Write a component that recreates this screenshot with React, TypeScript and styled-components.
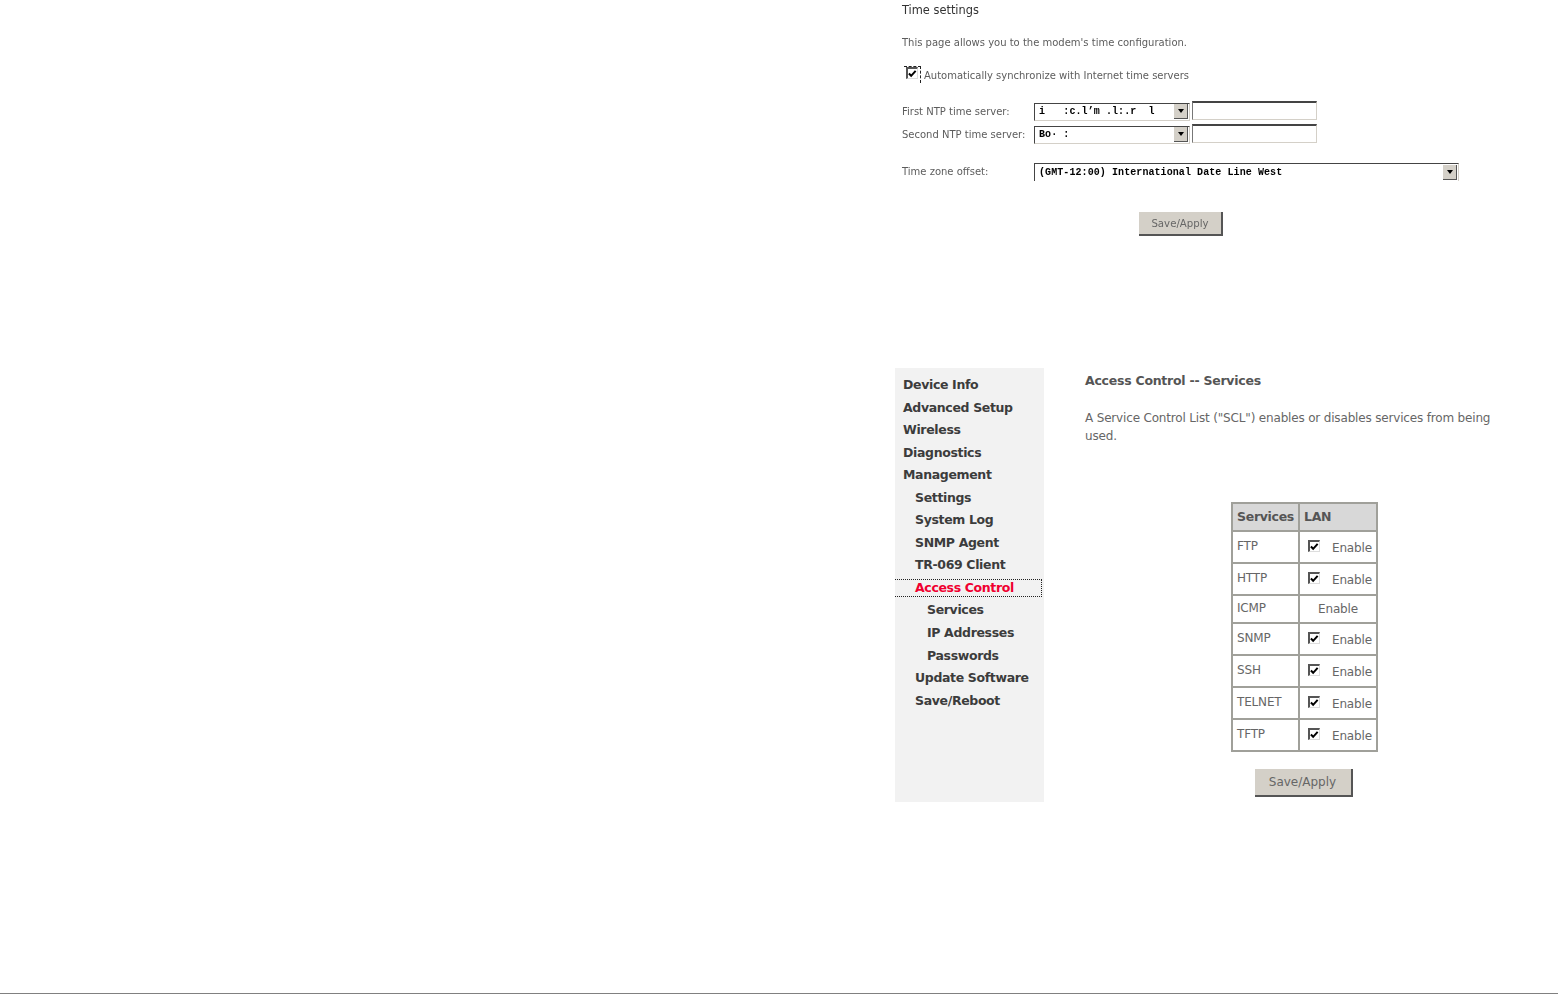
import React from 'react';
import styled, { createGlobalStyle } from 'styled-components';

const GlobalStyle = createGlobalStyle`
  html, body {
    margin: 0;
    padding: 0;
    background: #fff;
  }
  body {
    font-family: 'DejaVu Sans', 'Liberation Sans', sans-serif;
  }
`;

const Page = styled.div`
  width: 1558px;
  height: 994px;
  box-sizing: border-box;
  padding-left: 895px;
  border-bottom: 1px solid #808080;
  overflow: hidden;
`;

/* time settings, a blurry scan in the original */
const TimeSection = styled.section`
  height: 368px;
  box-sizing: border-box;
  padding: 3px 0 0 7px;
  color: #5c5c5c;
  font-size: 10px;
  filter: blur(0.5px);
`;
const TimeTitle = styled.div`
  height: 15px;
  line-height: 15px;
  font-size: 11.4px;
  color: #333;
`;
const TimeText = styled.div`
  margin-top: 17px;
  height: 15px;
  line-height: 15px;
`;
const SyncRow = styled.div`
  margin-top: 15px;
  height: 18px;
  display: flex;
  align-items: center;
  line-height: 18px;
  padding-top: 2px;
`;
const FocusBox = styled.span`
  width: 17px;
  height: 17px;
  margin: -4px 3px 0 2px;
  box-sizing: border-box;
  border: 1px dashed #222;
  border-left: none;
  border-bottom: none;
  display: flex;
  align-items: center;
  justify-content: center;
`;
const FieldRow = styled.div<{ $top: number }>`
  margin-top: ${({ $top }) => $top}px;
  display: flex;
  align-items: center;
  height: 19px;
`;
const FieldLabel = styled.span`
  width: 132px;
  flex: none;
`;
const SelectBox = styled.div<{ $width: number; $cut?: boolean }>`
  width: ${({ $width }) => $width}px;
  height: 18px;
  box-sizing: border-box;
  flex: none;
  display: flex;
  align-items: center;
  justify-content: space-between;
  padding: 0 1px 0 4px;
  background: #fff;
  border: 1px solid #d4d0c8;
  border-bottom: ${({ $cut }) => ($cut ? 'none' : '1px solid #d4d0c8')};
  border-top-color: #444;
  border-left-color: #444;
  font-family: 'Liberation Mono', monospace;
  font-size: 10px;
  font-weight: 700;
  letter-spacing: 0.08px;
  color: #000;
  white-space: pre;
`;
const Arrow = styled.span`
  width: 14px;
  height: 15px;
  flex: none;
  background: #d4d0c8;
  border-right: 1px solid #555;
  border-bottom: 1px solid #555;
  box-sizing: border-box;
  display: flex;
  align-items: center;
  justify-content: center;
  &::after {
    content: '';
    border: 3px solid transparent;
    border-top: 4px solid #000;
    border-bottom: none;
  }
`;
const TextBox = styled.div`
  width: 125px;
  height: 19px;
  margin: -2px 0 0 2px;
  box-sizing: border-box;
  background: #fff;
  border: 1px solid #d4d0c8;
  border-top: 2px solid #444;
  border-left-color: #777;
`;
const TimeButtonRow = styled.div`
  margin-top: 31px;
  padding-left: 237px;
`;
const Button = styled.button<{ $small?: boolean }>`
  display: block;
  box-sizing: border-box;
  width: ${({ $small }) => ($small ? 84 : 98)}px;
  height: ${({ $small }) => ($small ? 24 : 28)}px;
  padding: 0;
  background: #d4d0c8;
  border: none;
  border-right: 2px solid #555;
  border-bottom: 2px solid #555;
  font-family: inherit;
  font-size: ${({ $small }) => ($small ? 10.2 : 12)}px;
  color: #666;
`;

/* access control panel */
const AccessSection = styled.section`
  display: flex;
  height: 434px;
`;
const Sidebar = styled.nav`
  width: 149px;
  flex: none;
  box-sizing: border-box;
  padding-top: 6px;
  background: #f2f2f2;
`;
const NavItem = styled.div<{ $level?: number; $active?: boolean }>`
  height: ${({ $active }) => ($active ? '18px' : '22.55px')};
  margin: ${({ $active }) => ($active ? '2.27px 0' : '0')};
  box-sizing: border-box;
  width: 147px;
  padding-left: ${({ $level = 0 }) => 8 + $level * 12}px;
  font-size: 12.5px;
  font-weight: 700;
  letter-spacing: -0.35px;
  color: ${({ $active }) => ($active ? '#f00030' : '#3c3c3c')};
  white-space: nowrap;
  border: ${({ $active }) => ($active ? '1px dotted #222' : 'none')};
  border-left: none;
  line-height: ${({ $active }) => ($active ? '16px' : '22px')};
`;
const Content = styled.div`
  width: 439px;
  margin-left: 41px;
  padding-top: 4px;
  color: #666;
  font-size: 12px;
  letter-spacing: -0.17px;
`;
const Title = styled.h1`
  margin: 0;
  height: 18px;
  line-height: 18px;
  font-size: 12.5px;
  font-weight: 700;
  letter-spacing: -0.25px;
  color: #555;
`;
const Intro = styled.p`
  margin: 19px 0 0;
  width: 415px;
  line-height: 18px;
`;
const ServiceTable = styled.table`
  margin: 57px auto 0;
  width: 145px;
  border-collapse: collapse;
  border: 2px solid #a0a09a;
  table-layout: fixed;
`;
const HeadCell = styled.th`
  height: 28px;
  padding: 0 0 2px 4px;
  box-sizing: border-box;
  background: #d8d8d8;
  border: 2px solid #a0a09a;
  font-size: 12.5px;
  font-weight: 700;
  letter-spacing: -0.3px;
  text-align: left;
  color: #555;
`;
const NameCell = styled.td`
  padding: 0 0 3px 4px;
  border: 2px solid #a0a09a;
  font-size: 12px;
`;
const EnableCell = styled.td<{ $plain?: boolean }>`
  padding: 0;
  height: ${({ $plain }) => ($plain ? 28 : 32)}px;
  box-sizing: border-box;
  border: 2px solid #a0a09a;
  text-align: center;
`;
const EnableLabel = styled.label`
  display: flex;
  align-items: center;
  padding: 2px 0 0 8px;
  gap: 12px;
`;
const CheckMark = styled.span`
  width: 12px;
  height: 12px;
  box-sizing: border-box;
  margin-top: -4px;
  flex: none;
  display: flex;
  background: #fff;
  border: 1px solid #ddd;
  border-top: 2px solid #555;
  border-left: 2px solid #555;
`;
const BottomButton = styled.div`
  margin-top: 17px;
  padding-right: 2px;
  display: flex;
  justify-content: center;
`;

const Check = () => (
  <CheckMark>
    <svg width="10" height="10" viewBox="0 0 10 10">
      <path d="M1 4.5 L3.5 7 L8.5 1.5" fill="none" stroke="#000" strokeWidth="2.2" />
    </svg>
  </CheckMark>
);

const navItems = [
  { label: 'Device Info', level: 0 },
  { label: 'Advanced Setup', level: 0 },
  { label: 'Wireless', level: 0 },
  { label: 'Diagnostics', level: 0 },
  { label: 'Management', level: 0 },
  { label: 'Settings', level: 1 },
  { label: 'System Log', level: 1 },
  { label: 'SNMP Agent', level: 1 },
  { label: 'TR-069 Client', level: 1 },
  { label: 'Access Control', level: 1, active: true },
  { label: 'Services', level: 2 },
  { label: 'IP Addresses', level: 2 },
  { label: 'Passwords', level: 2 },
  { label: 'Update Software', level: 1 },
  { label: 'Save/Reboot', level: 1 },
];

const services = ['FTP', 'HTTP', 'ICMP', 'SNMP', 'SSH', 'TELNET', 'TFTP'];

const App = () => {
  return (
    <Page>
      <GlobalStyle />
      <TimeSection>
        <TimeTitle>Time settings</TimeTitle>
        <TimeText>This page allows you to the modem's time configuration.</TimeText>
        <SyncRow>
          <FocusBox>
            <Check />
          </FocusBox>
          Automatically synchronize with Internet time servers
        </SyncRow>
        <FieldRow $top={17}>
          <FieldLabel>First NTP time server:</FieldLabel>
          <SelectBox $width={156}>
            {'i   :c.l’m .l:.r  l'}
            <Arrow />
          </SelectBox>
          <TextBox />
        </FieldRow>
        <FieldRow $top={4}>
          <FieldLabel>Second NTP time server:</FieldLabel>
          <SelectBox $width={156}>
            {'Bo· :'}
            <Arrow />
          </SelectBox>
          <TextBox />
        </FieldRow>
        <FieldRow $top={18}>
          <FieldLabel>Time zone offset:</FieldLabel>
          <SelectBox $width={425} $cut>
            (GMT-12:00) International Date Line West
            <Arrow />
          </SelectBox>
        </FieldRow>
        <TimeButtonRow>
          <Button $small>Save/Apply</Button>
        </TimeButtonRow>
      </TimeSection>

      <AccessSection>
        <Sidebar>
          {navItems.map((item) => (
            <NavItem key={item.label} $level={item.level} $active={item.active}>
              {item.label}
            </NavItem>
          ))}
        </Sidebar>
        <Content>
          <Title>Access Control -- Services</Title>
          <Intro>
            A Service Control List ("SCL") enables or disables services from being used.
          </Intro>
          <ServiceTable>
            <colgroup>
              <col width="67" />
              <col width="78" />
            </colgroup>
            <thead>
              <tr>
                <HeadCell>Services</HeadCell>
                <HeadCell>LAN</HeadCell>
              </tr>
            </thead>
            <tbody>
              {services.map((name) => (
                <tr key={name}>
                  <NameCell>{name}</NameCell>
                  {name === 'ICMP' ? (
                    <EnableCell $plain>Enable</EnableCell>
                  ) : (
                    <EnableCell>
                      <EnableLabel>
                        <Check />
                        Enable
                      </EnableLabel>
                    </EnableCell>
                  )}
                </tr>
              ))}
            </tbody>
          </ServiceTable>
          <BottomButton>
            <Button>Save/Apply</Button>
          </BottomButton>
        </Content>
      </AccessSection>
    </Page>
  );
};

export default App;
